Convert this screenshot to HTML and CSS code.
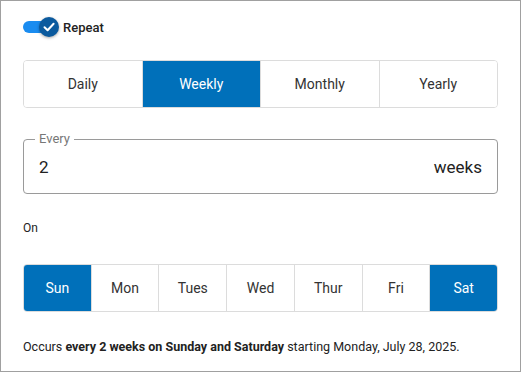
FILE: index.html
```html
<!DOCTYPE html>
<html lang="en">
<head>
  <meta charset="UTF-8">
  <title>Recurrence</title>
  <link rel="stylesheet" href="styles.css">
</head>
<body>
  <div class="panel">
    <!-- Repeat toggle -->
    <label class="toggle-row">
      <span class="toggle">
        <span class="track"></span>
        <span class="knob">
          <svg width="14" height="14" viewBox="0 0 14 14">
            <path d="M2.5 7.2 L5.6 10.2 L11.6 3.8" fill="none" stroke="#fff" stroke-width="2" stroke-linecap="round" stroke-linejoin="round"/>
          </svg>
        </span>
      </span>
      <span class="toggle-label">Repeat</span>
    </label>

    <!-- Frequency -->
    <div class="segments freq">
      <button class="seg">Daily</button>
      <button class="seg selected">Weekly</button>
      <button class="seg">Monthly</button>
      <button class="seg">Yearly</button>
    </div>

    <!-- Interval -->
    <fieldset class="every">
      <legend>Every</legend>
      <div class="every-row">
        <span class="every-value">2</span>
        <span class="every-unit">weeks</span>
      </div>
    </fieldset>

    <div class="on-label">On</div>

    <!-- Days -->
    <div class="segments days">
      <button class="seg selected">Sun</button>
      <button class="seg">Mon</button>
      <button class="seg">Tues</button>
      <button class="seg">Wed</button>
      <button class="seg">Thur</button>
      <button class="seg">Fri</button>
      <button class="seg selected">Sat</button>
    </div>

    <p class="summary">Occurs <b>every 2 weeks on Sunday and Saturday</b> starting Monday, July 28, 2025.</p>
  </div>
</body>
</html>
```

FILE: styles.css
```css
body {
  margin: 0;
  font-family: Roboto, "Liberation Sans", sans-serif;
  color: #222;
  background: #fff;
}

.panel {
  box-sizing: border-box;
  width: 521px;
  height: 372px;
  border: 1px solid #a0a0a0;
  padding: 16px 22px 0;
}

.toggle-row {
  display: flex;
  align-items: center;
  height: 20px;
}

.toggle {
  position: relative;
  width: 37px;
  height: 20px;
}

.track {
  position: absolute;
  left: 0;
  top: 4px;
  width: 34px;
  height: 12px;
  border-radius: 6px;
  background: #1a8cf0;
}

.knob {
  position: absolute;
  left: 16px;
  top: 0;
  width: 20px;
  height: 20px;
  border-radius: 50%;
  background: #0b5a9e;
  box-shadow: 0 1px 3px rgba(0, 0, 0, 0.35);
  display: flex;
  align-items: center;
  justify-content: center;
}

.toggle-label {
  margin-left: 3px;
  font-size: 13px;
  font-weight: 500;
  color: #222;
}

.segments {
  display: flex;
  height: 48px;
  border: 1px solid #dcdcdc;
  border-radius: 4px;
  overflow: hidden;
  box-sizing: border-box;
}

.freq {
  margin-top: 23px;
}

.seg {
  flex: 1;
  border: none;
  border-left: 1px solid #dcdcdc;
  background: #fff;
  color: #333;
  font-family: inherit;
  font-size: 14px;
  padding: 0;
}

.seg:first-child {
  border-left: none;
}

.seg.selected {
  background: #0070ba;
  color: #fff;
}

.every {
  margin: 24px 0 0;
  padding: 0 15px 6px;
  border: 1px solid #9a9a9a;
  border-radius: 4px;
  min-width: 0;
}

.every legend {
  margin-left: -4px;
  padding: 0 4px;
  font-size: 13px;
  line-height: 14px;
  color: #777;
}

.every-row {
  display: flex;
  justify-content: space-between;
  align-items: center;
  height: 41px;
  font-size: 17px;
  color: #222;
}

.on-label {
  margin-top: 27px;
  font-size: 12px;
  line-height: 14px;
}

.days {
  margin-top: 29px;
}

.summary {
  margin: 28px 0 0;
  font-size: 12.5px;
  line-height: 14px;
}

.summary b {
  font-weight: 700;
}
```
